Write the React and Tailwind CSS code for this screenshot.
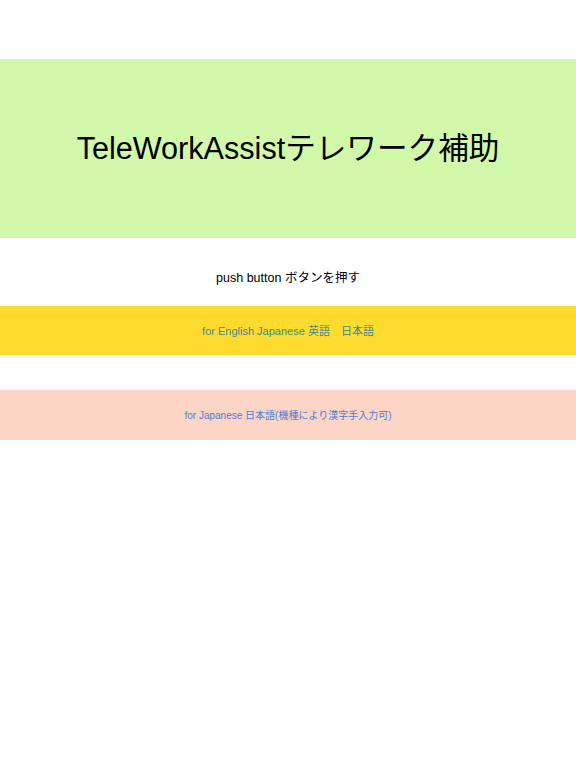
export default function App() {
  const font = { fontFamily: '"Liberation Sans", "Noto Sans CJK JP", sans-serif' }
  return (
    <div className="w-[576px] h-[768px] bg-white flex flex-col" style={font}>
      <div className="h-[59px]" />
      <div className="h-[179px] bg-[#d2f9a9] flex items-center justify-center pt-[1px]">
        <h1 className="text-[30.6px] text-black">TeleWorkAssistテレワーク補助</h1>
      </div>
      <div className="h-[68px] flex items-center justify-center pt-[13px]">
        <span className="text-[12.5px] text-black">push button ボタンを押す</span>
      </div>
      <button className="h-[49px] bg-[#fedb2c] flex items-center justify-center pt-[1px] text-[11px] text-[#3e8a8e]">
        for English Japanese 英語　日本語
      </button>
      <div className="h-[35px]" />
      <button className="h-[50px] bg-[#fdd5c6] flex items-center justify-center text-[10px] text-[#4a7fd6]">
        for Japanese 日本語(機種により漢字手入力可)
      </button>
    </div>
  )
}
